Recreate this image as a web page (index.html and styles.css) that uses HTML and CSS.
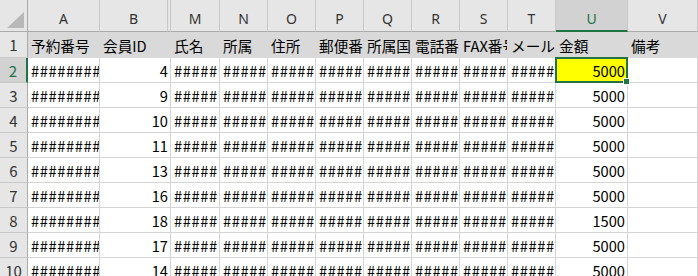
FILE: index.html
```html
<!DOCTYPE html>
<html lang="ja">
<head>
<meta charset="utf-8">
<link rel="stylesheet" href="styles.css">
</head>
<body>
<div class="sheet">
  <div class="corner"><svg width="17" height="16" viewBox="0 0 17 16"><polygon points="17,0 17,16 0,16" fill="#b8b8b8"/></svg></div>
  <div class="ch">A</div>
  <div class="ch">B</div>
  <div class="ch hidden"></div>
  <div class="ch">M</div>
  <div class="ch">N</div>
  <div class="ch">O</div>
  <div class="ch">P</div>
  <div class="ch">Q</div>
  <div class="ch">R</div>
  <div class="ch">S</div>
  <div class="ch">T</div>
  <div class="ch sel">U</div>
  <div class="ch">V</div>

  <div class="rh">1</div>
  <div class="c h1">予約番号</div>
  <div class="c h1 b">会員ID</div>
  <div class="c h1">氏名</div>
  <div class="c h1">所属</div>
  <div class="c h1">住所</div>
  <div class="c h1">郵便番号</div>
  <div class="c h1">所属国</div>
  <div class="c h1">電話番号</div>
  <div class="c h1">FAX番号</div>
  <div class="c h1">メールアドレス</div>
  <div class="c h1">金額</div>
  <div class="c h1">備考</div>

  <div class="rh sel">2</div>
  <div class="c">#########</div><div class="c b n">4</div>
  <div class="c">#####</div><div class="c">#####</div><div class="c">#####</div><div class="c">#####</div><div class="c">#####</div><div class="c">#####</div><div class="c">#####</div><div class="c">#####</div>
  <div class="c n active">5000<span class="selbox"><span class="handle"></span></span></div><div class="c"></div>

  <div class="rh">3</div>
  <div class="c">#########</div><div class="c b n">9</div>
  <div class="c">#####</div><div class="c">#####</div><div class="c">#####</div><div class="c">#####</div><div class="c">#####</div><div class="c">#####</div><div class="c">#####</div><div class="c">#####</div>
  <div class="c n">5000</div><div class="c"></div>

  <div class="rh">4</div>
  <div class="c">#########</div><div class="c b n">10</div>
  <div class="c">#####</div><div class="c">#####</div><div class="c">#####</div><div class="c">#####</div><div class="c">#####</div><div class="c">#####</div><div class="c">#####</div><div class="c">#####</div>
  <div class="c n">5000</div><div class="c"></div>

  <div class="rh">5</div>
  <div class="c">#########</div><div class="c b n">11</div>
  <div class="c">#####</div><div class="c">#####</div><div class="c">#####</div><div class="c">#####</div><div class="c">#####</div><div class="c">#####</div><div class="c">#####</div><div class="c">#####</div>
  <div class="c n">5000</div><div class="c"></div>

  <div class="rh">6</div>
  <div class="c">#########</div><div class="c b n">13</div>
  <div class="c">#####</div><div class="c">#####</div><div class="c">#####</div><div class="c">#####</div><div class="c">#####</div><div class="c">#####</div><div class="c">#####</div><div class="c">#####</div>
  <div class="c n">5000</div><div class="c"></div>

  <div class="rh">7</div>
  <div class="c">#########</div><div class="c b n">16</div>
  <div class="c">#####</div><div class="c">#####</div><div class="c">#####</div><div class="c">#####</div><div class="c">#####</div><div class="c">#####</div><div class="c">#####</div><div class="c">#####</div>
  <div class="c n">5000</div><div class="c"></div>

  <div class="rh">8</div>
  <div class="c">#########</div><div class="c b n">18</div>
  <div class="c">#####</div><div class="c">#####</div><div class="c">#####</div><div class="c">#####</div><div class="c">#####</div><div class="c">#####</div><div class="c">#####</div><div class="c">#####</div>
  <div class="c n">1500</div><div class="c"></div>

  <div class="rh">9</div>
  <div class="c">#########</div><div class="c b n">17</div>
  <div class="c">#####</div><div class="c">#####</div><div class="c">#####</div><div class="c">#####</div><div class="c">#####</div><div class="c">#####</div><div class="c">#####</div><div class="c">#####</div>
  <div class="c n">5000</div><div class="c"></div>

  <div class="rh">10</div>
  <div class="c">#########</div><div class="c b n">14</div>
  <div class="c">#####</div><div class="c">#####</div><div class="c">#####</div><div class="c">#####</div><div class="c">#####</div><div class="c">#####</div><div class="c">#####</div><div class="c">#####</div>
  <div class="c n">5000</div><div class="c"></div>
</div>
</body>
</html>
```

FILE: styles.css
```css
html, body {
  margin: 0;
  padding: 0;
  background: #ffffff;
  overflow: hidden;
}

.sheet {
  display: grid;
  grid-template-columns: 28px 72px 68px 3px 49px 48px 48px 48px 48px 48px 48px 48px 72px 70px;
  grid-template-rows: 32px 26px repeat(9, 25px);
  width: 698px;
  font-family: "Noto Sans CJK JP", sans-serif;
  font-size: 14.67px;
  color: #000000;
}

.sheet > div {
  box-sizing: border-box;
  overflow: hidden;
  white-space: nowrap;
}

.corner {
  background: #e6e6e6;
  border-right: 1px solid #ababab;
  border-bottom: 1px solid #ababab;
  display: flex;
  align-items: flex-end;
  justify-content: flex-end;
  padding: 0 3px 3px 0;
}

.corner svg {
  display: block;
}

.ch {
  background: #e6e6e6;
  border-right: 1px solid #c8c8c8;
  border-bottom: 1px solid #ababab;
  display: flex;
  align-items: flex-end;
  justify-content: center;
  padding-bottom: 3px;
  font-family: "Noto Sans", sans-serif;
  font-size: 14px;
  line-height: 18px;
  color: #333333;
}

.ch.hidden {
  padding: 0;
}

.ch.sel {
  background: #d2d2d2;
  color: #217346;
  border-bottom: 2px solid #217346;
  padding-bottom: 2px;
}

.rh {
  background: #e6e6e6;
  border-right: 1px solid #ababab;
  border-bottom: 1px solid #c8c8c8;
  display: flex;
  align-items: center;
  justify-content: center;
  padding-top: 1px;
  font-size: 15px;
  line-height: 18px;
  color: #333333;
}

.rh.sel {
  background: #d2d2d2;
  color: #217346;
  border-right: 2px solid #217346;
}

.c {
  border-right: 1px solid #d4d4d4;
  border-bottom: 1px solid #d4d4d4;
  display: flex;
  align-items: center;
  padding: 2px 2px 0 3px;
  line-height: 18px;
  letter-spacing: 0.6px;
}

.c.b {
  grid-column: span 2;
}

.c.n {
  justify-content: flex-end;
  padding-right: 2px;
  letter-spacing: 0;
}

.c.h1 {
  background: #d9d9d9;
  border-right-color: #d9d9d9;
  border-bottom-color: #d9d9d9;
  letter-spacing: 0;
}

.c.active {
  background: #ffff00;
  border-right-color: #ffff00;
  position: relative;
  overflow: visible !important;
}

.selbox {
  position: absolute;
  left: -1px;
  top: -1px;
  width: 73px;
  height: 26px;
  box-sizing: border-box;
  border: 2px solid #217346;
}

.handle {
  position: absolute;
  right: -4px;
  bottom: -4px;
  width: 5px;
  height: 5px;
  background: #217346;
  border: 1px solid #ffffff;
}
```
